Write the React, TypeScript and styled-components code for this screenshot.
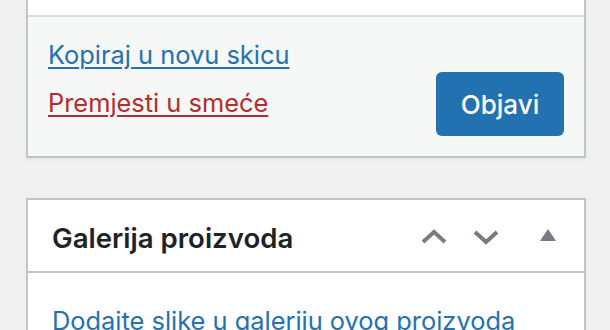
import * as React from "react";
import styled, { createGlobalStyle } from "styled-components";

const GlobalStyle = createGlobalStyle`
  html, body {
    margin: 0;
    padding: 0;
    background: #f0f0f1;
    font-family: Inter, "Noto Sans", sans-serif;
    color: #3c434a;
  }
`;

const Page = styled.div`
  width: 560px;
  padding-left: 26px;
  display: flex;
  flex-direction: column;
  gap: 40px;
`;

const Box = styled.div`
  background: #fff;
  border: 2px solid #c3c4c7;
  border-top-width: ${(p: { $openTop?: boolean }) => (p.$openTop ? "0" : "2px")};
  box-shadow: 0 2px 2px rgba(0, 0, 0, 0.04);
`;

const MiscArea = styled.div`
  height: 15px;
  background: #fff;
  border-bottom: 2px solid #dcdcde;
`;

const Actions = styled.div`
  background: #f6f7f7;
  padding: 20px;
  display: flex;
  justify-content: space-between;
  align-items: flex-end;
`;

const LinkList = styled.div`
  display: flex;
  flex-direction: column;
  gap: 12px;
  padding-bottom: 15px;
`;

const ActionLink = styled.a<{ $danger?: boolean }>`
  font-size: 25.4px;
  line-height: 36px;
  color: ${(p) => (p.$danger ? "#b32d2e" : "#2271b1")};
  text-decoration: underline;
  text-underline-offset: 3px;
  text-decoration-thickness: 2px;
`;

const PrimaryButton = styled.button`
  width: 128px;
  height: 64px;
  border: none;
  border-radius: 6px;
  background: #2271b1;
  color: #fff;
  font-family: inherit;
  font-size: 26px;
  font-weight: 500;
  padding: 0;
`;

const Header = styled.div`
  height: 71px;
  display: flex;
  align-items: center;
  border-bottom: 2px solid #c3c4c7;
`;

const Title = styled.h2`
  flex: 1;
  margin: 0;
  padding: 4px 24px 0;
  font-size: 27.6px;
  font-weight: 600;
  color: #1d2327;
`;

const HandleButton = styled.button<{ $wide?: boolean }>`
  width: ${(p) => (p.$wide ? "72px" : "52px")};
  height: 71px;
  border: none;
  background: none;
  padding: 0;
  display: flex;
  align-items: center;
  justify-content: center;
  color: #787c82;
`;

const Inside = styled.div`
  padding: 30px 24px 24px;
`;

const GalleryLink = styled.a`
  font-size: 25.4px;
  line-height: 36px;
  color: #2271b1;
`;

const Chevron = ({ down }: { down?: boolean }) => (
  <svg width="28" height="18" viewBox="0 0 28 18" style={{ marginTop: 2 }}>
    <polyline
      points={down ? "3,4 14,14 25,4" : "3,14 14,4 25,14"}
      fill="none"
      stroke="currentColor"
      strokeWidth="4"
    />
  </svg>
);

const Triangle = () => (
  <svg width="16" height="12" viewBox="0 0 16 12" style={{ marginTop: -2 }}>
    <polygon points="0,12 8,0 16,12" fill="currentColor" />
  </svg>
);

export default function App() {
  return (
    <>
      <GlobalStyle />
      <Page>
        <Box $openTop>
          <MiscArea />
          <Actions>
            <LinkList>
              <ActionLink href="#">Kopiraj u novu skicu</ActionLink>
              <ActionLink href="#" $danger>
                Premjesti u smeće
              </ActionLink>
            </LinkList>
            <PrimaryButton>Objavi</PrimaryButton>
          </Actions>
        </Box>
        <Box>
          <Header>
            <Title>Galerija proizvoda</Title>
            <HandleButton>
              <Chevron />
            </HandleButton>
            <HandleButton>
              <Chevron down />
            </HandleButton>
            <HandleButton $wide>
              <Triangle />
            </HandleButton>
          </Header>
          <Inside>
            <GalleryLink href="#">Dodaite slike u galeriju ovog proizvoda</GalleryLink>
          </Inside>
        </Box>
      </Page>
    </>
  );
}
